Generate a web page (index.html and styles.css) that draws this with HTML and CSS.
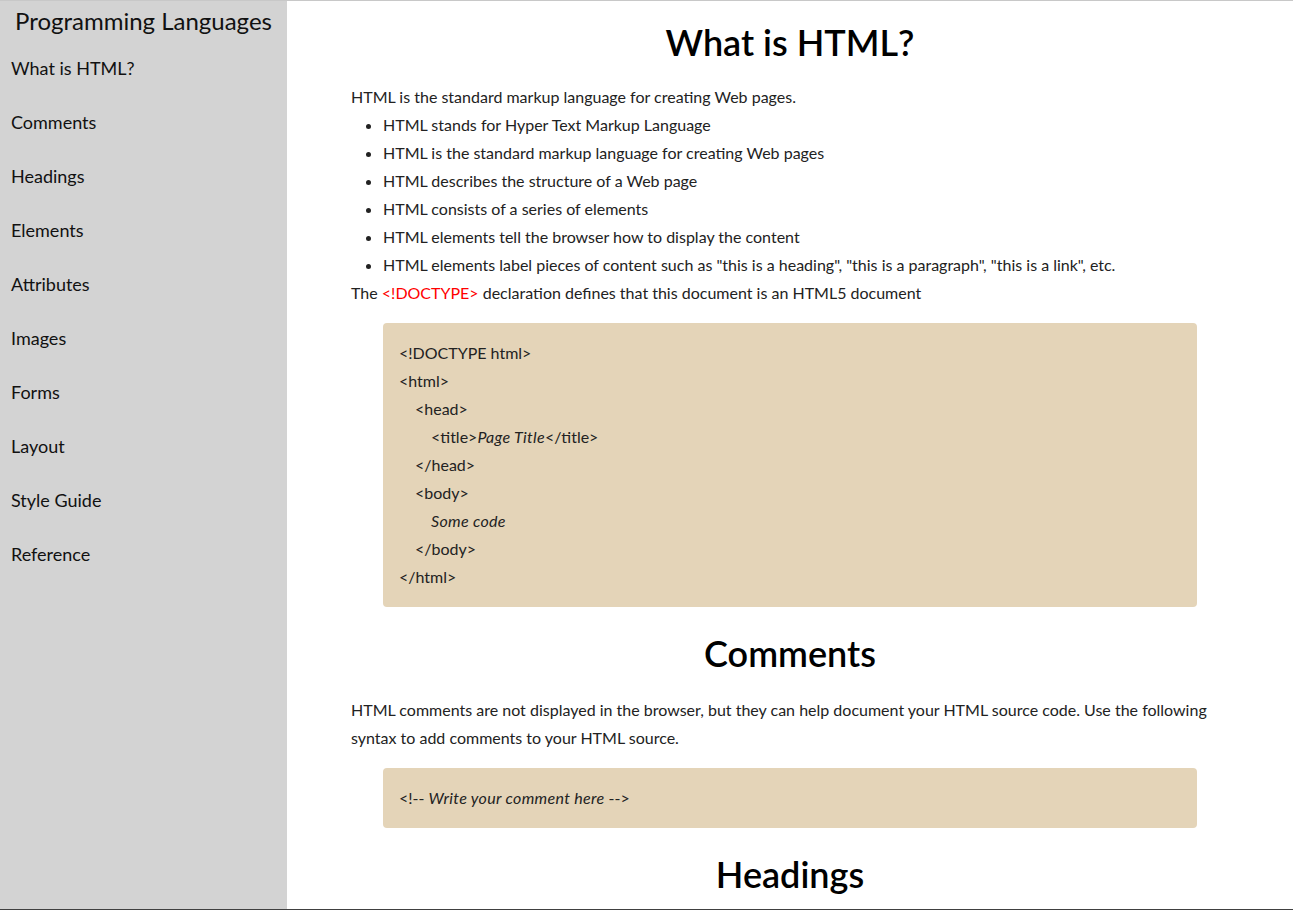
FILE: index.html
```
<!DOCTYPE html>
<html lang="en">
<head>
<meta charset="utf-8">
<title>Programming Languages</title>
<link rel="stylesheet" href="styles.css">
</head>
<body>
<div class="page">
  <nav class="sidebar">
    <header class="sidebar-title">Programming Languages</header>
    <a class="nav-link" href="#what">What is HTML?</a>
    <a class="nav-link" href="#comments">Comments</a>
    <a class="nav-link" href="#headings">Headings</a>
    <a class="nav-link" href="#elements">Elements</a>
    <a class="nav-link" href="#attributes">Attributes</a>
    <a class="nav-link" href="#images">Images</a>
    <a class="nav-link" href="#forms">Forms</a>
    <a class="nav-link" href="#layout">Layout</a>
    <a class="nav-link" href="#style">Style Guide</a>
    <a class="nav-link" href="#reference">Reference</a>
  </nav>
  <main class="main">
    <section class="section" id="what">
      <h1 class="section-title first">What is HTML?</h1>
      <p class="text">HTML is the standard markup language for creating Web pages.</p>
      <ul class="list">
        <li>HTML stands for Hyper Text Markup Language</li>
        <li>HTML is the standard markup language for creating Web pages</li>
        <li>HTML describes the structure of a Web page</li>
        <li>HTML consists of a series of elements</li>
        <li>HTML elements tell the browser how to display the content</li>
        <li>HTML elements label pieces of content such as "this is a heading", "this is a paragraph", "this is a link", etc.</li>
      </ul>
      <p class="text">The <span class="red">&lt;!DOCTYPE&gt;</span> declaration defines that this document is an HTML5 document</p>
      <div class="code">
        <div class="code-line">&lt;!DOCTYPE html&gt;</div>
        <div class="code-line">&lt;html&gt;</div>
        <div class="code-line indent1">&lt;head&gt;</div>
        <div class="code-line indent2">&lt;title&gt;<em>Page Title</em>&lt;/title&gt;</div>
        <div class="code-line indent1">&lt;/head&gt;</div>
        <div class="code-line indent1">&lt;body&gt;</div>
        <div class="code-line indent2"><em>Some code</em></div>
        <div class="code-line indent1">&lt;/body&gt;</div>
        <div class="code-line">&lt;/html&gt;</div>
      </div>
    </section>
    <section class="section" id="comments">
      <h1 class="section-title">Comments</h1>
      <p class="text">HTML comments are not displayed in the browser, but they can help document your HTML source code. Use the following syntax to add comments to your HTML source.</p>
      <div class="code">
        <div class="code-line">&lt;!-- <em>Write your comment here</em> --&gt;</div>
      </div>
    </section>
    <section class="section" id="headings">
      <h1 class="section-title">Headings</h1>
      <p class="text">HTML headings are titles or subtitles that you want to display on a webpage.</p>
    </section>
  </main>
</div>
</body>
</html>
```

FILE: styles.css
```
html, body {
  margin: 0;
  padding: 0;
}
body {
  font-family: Lato, "Open Sans", sans-serif;
  color: #222;
  background: #fff;
}
.page {
  display: flex;
  height: 100vh;
  box-sizing: border-box;
  border-top: 1px solid #c8c8c8;
  border-bottom: 1px solid #404040;
  overflow: hidden;
}
.sidebar {
  flex: 0 0 287px;
  width: 287px;
  background: #d3d3d3;
  display: flex;
  flex-direction: column;
}
.sidebar-title {
  font-size: 24px;
  line-height: 40px;
  text-align: center;
  color: #111;
}
.nav-link {
  display: block;
  padding-left: 11px;
  font-size: 18px;
  line-height: 54px;
  color: #111;
  text-decoration: none;
}
.main {
  flex: 1;
  padding: 0 64px;
  min-width: 0;
}
.section-title {
  font-size: 36px;
  font-weight: 600;
  line-height: 44px;
  text-align: center;
  color: #000;
  margin: 24px 0 21px;
}
.section-title.first {
  margin-top: 19px;
  margin-bottom: 19px;
}
.text {
  margin: 0;
  font-size: 16px;
  line-height: 28px;
}
.list {
  margin: 0;
  padding-left: 32px;
  font-size: 16px;
  line-height: 28px;
}
.red {
  color: #f00;
}
.code {
  margin: 16px 32px 0;
  padding: 16px;
  background: #e4d4b8;
  border-radius: 4px;
  font-size: 16px;
  line-height: 28px;
  color: #222;
}
.code em {
  letter-spacing: 0.02em;
}
.indent1 {
  padding-left: 16px;
}
.indent2 {
  padding-left: 32px;
}
```
